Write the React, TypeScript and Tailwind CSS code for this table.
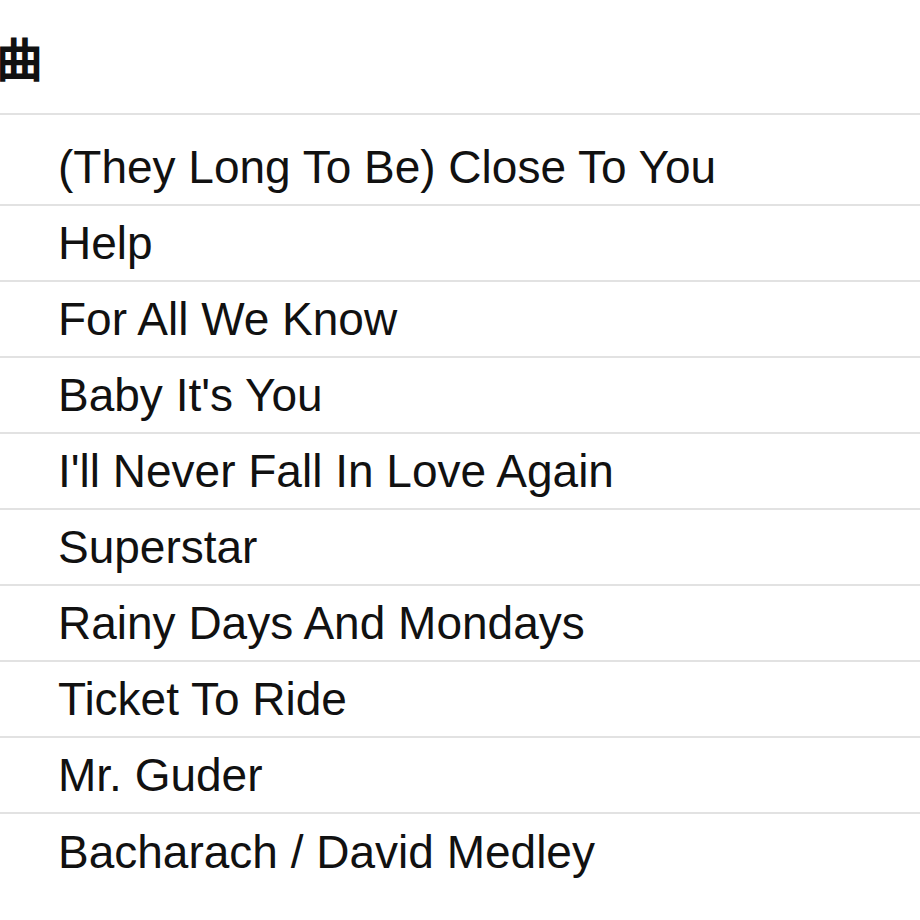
const songs = [
  "(They Long To Be) Close To You",
  "Help",
  "For All We Know",
  "Baby It's You",
  "I'll Never Fall In Love Again",
  "Superstar",
  "Rainy Days And Mondays",
  "Ticket To Ride",
  "Mr. Guder",
  "Bacharach / David Medley",
];

export default function App() {
  return (
    <div
      className="w-[920px] h-[920px] overflow-hidden bg-white text-[#111]"
      style={{ fontFamily: '"Liberation Sans", Arial, "Noto Sans CJK JP", sans-serif' }}
    >
      <div className="h-[115px] border-b-2 border-[#e2e2e2] flex items-start pt-[33px]">
        <h2 className="-ml-[4px] text-[47px] leading-[56px] font-bold">曲</h2>
      </div>
      <ul>
        {songs.map((song, i) => (
          <li
            key={song}
            className={
              "flex items-center pl-[58px] text-[46px] " +
              (i === 0 ? "h-[91px] pt-[16px] " : "h-[76px] ") +
              (i < songs.length - 1 ? "border-b-2 border-[#e2e2e2]" : "")
            }
          >
            {song}
          </li>
        ))}
      </ul>
    </div>
  );
}
